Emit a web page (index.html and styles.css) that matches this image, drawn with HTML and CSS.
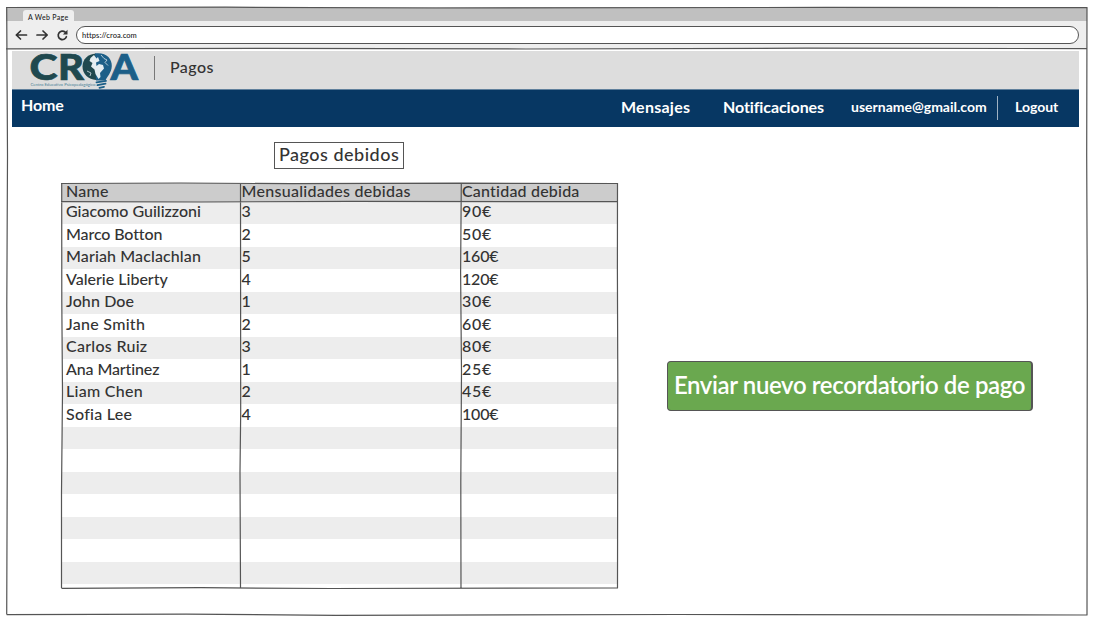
FILE: index.html
```html
<!DOCTYPE html>
<html lang="es">
<head>
<meta charset="utf-8">
<title>CROA - Pagos</title>
<link rel="stylesheet" href="styles.css">
</head>
<body>
<div class="window">
  <div class="tabs"><div class="tab">A Web Page</div></div>
  <div class="toolbar">
    <svg class="nav-icons" width="56" height="14" viewBox="0 0 56 14">
      <path d="M12.500 7H2.500M6.500 3L2.300 7L6.500 11M23 7H33M29 3L33.200 7L29 11"/>
      <path d="M51.200 4.200A4.200 4.200 0 1 0 52.400 8.700"/>
      <path class="solid" d="M53.500 1.800V6.400H48.900Z"/>
    </svg>
    <div class="address">https://croa.com</div>
  </div>
  <div class="page">
    <header class="brand">
      <svg class="logo" width="110" height="38" viewBox="0 0 110 38">
        <g class="mark">
          <text class="teal" x="-0.500" y="29" textLength="28" lengthAdjust="spacingAndGlyphs">C</text>
          <text class="teal" x="28" y="29" textLength="26" lengthAdjust="spacingAndGlyphs">R</text>
          <text class="blue" x="80.500" y="29" textLength="27.500" lengthAdjust="spacingAndGlyphs">A</text>
        </g>
        <path class="teal" d="M66 2.500C58 3 52.500 8 52.500 15.500C52.500 23 58.500 28.500 66 29Z"/>
        <path class="blue" d="M65 2.500C76 1 82 7.500 81.800 15C81.500 22 77 25.500 75.500 29.500H66Z"/>
        <path class="land" d="M64 4L60.500 7L59.500 10L62.500 12L61 15.500L64.500 18.500L65.500 23L68.500 28L70.500 26L70 22L74 17.500L73 14L69 13L66.500 15L66 11.500L69.500 10L68 6L66.500 7.500Z"/>
        <path class="crack" d="M71 4L74 7.500L77 9L75 11.500L78 14.500M57 20L61 22L60 25"/>
        <path class="coil" d="M66.500 31.300L76 29.800M67.500 34.200L75.500 32.600M69.500 36.800L74 35.800"/>
        <text class="tagline" x="0.500" y="34.500" textLength="65" lengthAdjust="spacingAndGlyphs">Centro Educativo Psicopedagógico</text>
      </svg>
      <div class="divider"></div>
      <h1>Pagos</h1>
    </header>
    <nav class="menu">
      <a class="home">Home</a>
      <a class="messages">Mensajes</a>
      <a class="notices">Notificaciones</a>
      <a class="user">username@gmail.com</a>
      <span class="menu-divider"></span>
      <a class="logout">Logout</a>
    </nav>
    <main class="content">
      <section class="debts">
        <h2>Pagos debidos</h2>
        <div class="table">
          <div class="row head"><span class="wide">Name</span><span class="wide">Mensualidades debidas</span><span>Cantidad debida</span></div>
          <div class="row"><span>Giacomo Guilizzoni</span><span>3</span><span>90€</span></div>
          <div class="row"><span class="tight">Marco Botton</span><span>2</span><span>50€</span></div>
          <div class="row"><span class="loose">Mariah Maclachlan</span><span>5</span><span class="amount-long">160€</span></div>
          <div class="row"><span>Valerie Liberty</span><span>4</span><span class="amount-long">120€</span></div>
          <div class="row"><span class="loose">John Doe</span><span>1</span><span>30€</span></div>
          <div class="row"><span class="wide">Jane Smith</span><span>2</span><span>60€</span></div>
          <div class="row"><span class="wide">Carlos Ruiz</span><span>3</span><span>80€</span></div>
          <div class="row"><span class="tight">Ana Martinez</span><span>1</span><span>25€</span></div>
          <div class="row"><span class="wide">Liam Chen</span><span>2</span><span>45€</span></div>
          <div class="row"><span class="wide">Sofia Lee</span><span>4</span><span class="amount-long">100€</span></div>
          <div class="row"></div><div class="row"></div><div class="row"></div><div class="row"></div>
          <div class="row"></div><div class="row"></div><div class="row"></div>
          <svg class="sketch" width="558" height="408" viewBox="0 0 558 408">
            <path d="M0 1.500L120 1L230 1.700L400 1.200L557 1.500M.7 1L.8 120L1.500 210L.5 310L.5 406M.5 406.300L140 405.700L270 406.500L557 406M556.500 1L556.400 90L556.800 200L556.500 406M0 19.600L140 20L290 19.300L557 19.700M179.500 1L179.700 230L179 290L179.500 406M400.300 1L399.600 90L400.500 190L399.800 300L400 406"/>
          </svg>
        </div>
      </section>
      <button class="remind" type="button">Enviar nuevo recordatorio de pago</button>
    </main>
  </div>
  <svg class="sketch" width="1084" height="612" viewBox="0 0 1084 612">
    <path d="M0 1.500L220 1.200L430 2L820 1.400L1081.500 1.700M.7 1.500L1.500 150L.8 300L1.300 450L.7 608.500M.7 608.700L180 608.200L330 609.300L670 608.500L1081.500 609M1081 1.500L1080.700 150L1081.300 300L1081 609M0 42.800L260 42.300L520 43L800 42.200L1081 42.600"/>
  </svg>
</div>
</body>
</html>
```
FILE: styles.css
```css
* { box-sizing: border-box; }
body {
  display: flow-root;
  min-height: 624px;
  margin: 0;
  background: #fff;
  color: #333;
  font: 500 16px/1 Lato, "Open Sans", sans-serif;
}
h1, h2 { margin: 0; font: inherit; }
.window {
  position: relative;
  width: 1081px;
  height: 608px;
  margin: 7px 0 0 6px;
}
.tabs {
  display: flex;
  height: 14px;
  padding: 3px 0 0 17px;
  background: #c0c0c0;
}
.tab {
  width: 51px;
  padding-left: 5px;
  border-radius: 3px 3px 0 0;
  background: #eee;
  color: #222;
  font-size: 7px;
  line-height: 15px;
  letter-spacing: .3px;
}
.toolbar {
  display: flex;
  align-items: center;
  gap: 6px;
  height: 28px;
  padding: 0 8px;
  background: #eee;
}
.nav-icons {
  flex: none;
  fill: none;
  stroke: #333;
  stroke-width: 1.7;
  stroke-linecap: round;
  stroke-linejoin: round;
}
.nav-icons .solid { fill: #333; stroke: none; }
.address {
  flex: 1;
  height: 18px;
  padding: 1px 0 0 5px;
  border: 1.3px solid #555;
  border-radius: 9px;
  background: #fff;
  color: #222;
  font-size: 7.5px;
  line-height: 16px;
  letter-spacing: .07px;
}
.page {
  width: 1067px;
  margin: 2px 0 0 6px;
}
.brand {
  display: flex;
  height: 38px;
  padding-left: 18px;
  background: #ddd;
}
.logo { display: block; flex: none; overflow: visible; }
.mark { font: 900 36px Lato, sans-serif; }
.teal { fill: #20494f; }
.blue { fill: #1c5f88; }
.mark .teal { stroke: #20494f; stroke-width: .7; }
.mark .blue { stroke: #1c5f88; stroke-width: .7; }
.land { fill: #e4edf1; }
.crack { fill: none; stroke: #d5e2e8; stroke-width: .8; }
.coil { fill: none; stroke: #1c5f88; stroke-width: 1.8; stroke-linecap: round; }
.tagline { fill: #4c8297; font: 400 4px Lato, sans-serif; }
.divider {
  width: 1px;
  height: 24px;
  margin: 5px 0 0 14px;
  background: #777;
}
.brand h1 {
  padding: 8px 0 0 15px;
  letter-spacing: .45px;
}
.menu {
  display: flex;
  height: 38px;
  padding-left: 9px;
  border-top: 1px solid #60809c;
  background: #073763;
  color: #fff;
}
.menu a { padding-top: 7px; white-space: nowrap; font-weight: 700; }
.home { width: 600px; letter-spacing: -.1px; }
.menu .messages, .menu .notices { padding-top: 9px; }
.messages { width: 102px; letter-spacing: .25px; }
.notices { width: 128px; letter-spacing: -.1px; }
.menu .user { width: 146px; padding-top: 10px; font-size: 14px; }
.menu-divider {
  width: 1px;
  height: 24px;
  margin: 6px 17px 0 0;
  background: #9fb2c3;
}
.menu .logout { padding-top: 10px; font-size: 14px; }
.content { display: flex; }
.debts { width: 556px; margin: 15px 0 0 50px; }
.debts h2 {
  width: 130px;
  height: 27px;
  margin: 0 0 14px 212px;
  padding-left: 4px;
  border: 1px solid #555;
  font-size: 18px;
  line-height: 23px;
  letter-spacing: .5px;
}
.table { position: relative; height: 405px; }
.row {
  display: grid;
  grid-template-columns: 179.5px 220.5px 156px;
  height: 23px;
  line-height: 19px;
  white-space: nowrap;
}
.row:nth-child(even) { height: 22px; background: #ededed; line-height: 18px; }
.row.head { height: 19px; background: #ccc; line-height: 16px; }
.row span:first-child { padding-left: 4px; }
.row span:last-child { letter-spacing: .7px; }
.row.head span:last-child { letter-spacing: .2px; }
.row .amount-long:last-child { letter-spacing: -.2px; }
.row .wide { letter-spacing: .28px; }
.row .loose { letter-spacing: .12px; }
.row .tight { letter-spacing: -.12px; }
.sketch {
  position: absolute;
  top: -1px;
  left: -.5px;
  overflow: visible;
  fill: none;
  stroke: #555;
  stroke-width: 1.2;
  pointer-events: none;
}
.table .sketch { left: -1px; }
.remind {
  width: 366px;
  height: 50px;
  margin: 234px 0 0 49px;
  padding: 0 0 3px;
  border: 1px solid #555;
  border-right-width: 2px;
  border-radius: 4px;
  background: #6aa84f;
  color: #fff;
  font: 600 24px/1 Lato, sans-serif;
  letter-spacing: -.38px;
  white-space: nowrap;
}
```
